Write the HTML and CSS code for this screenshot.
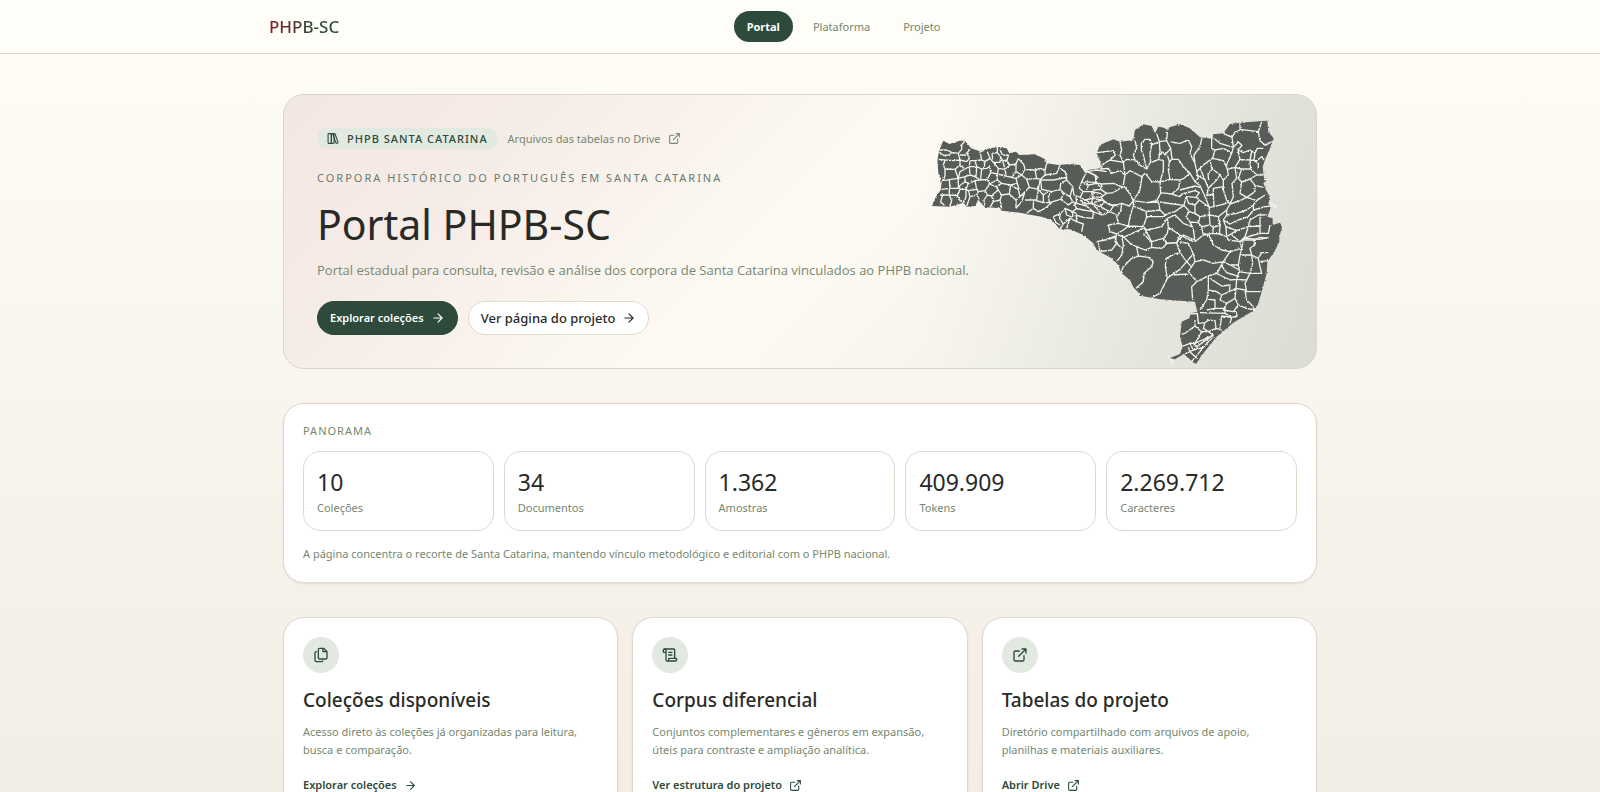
FILE: index.html
```html
<!DOCTYPE html>
<html lang="pt-BR">
<head>
    <meta charset="UTF-8">
    <meta name="viewport" content="width=device-width, initial-scale=1.0">
    <title>Portal PHPB-SC</title>
    <link rel="stylesheet" href="styles.css">
</head>
<body>

    <!-- ícones reutilizados -->
    <svg class="sprite" aria-hidden="true">
        <symbol id="i-arrow" viewBox="0 0 24 24"><path d="M5 12h14M12 5l7 7-7 7"/></symbol>
        <symbol id="i-external" viewBox="0 0 24 24"><path d="M15 3h6v6M10 14 21 3M18 13v6a2 2 0 0 1-2 2H5a2 2 0 0 1-2-2V8a2 2 0 0 1 2-2h6"/></symbol>
        <symbol id="i-library" viewBox="0 0 24 24"><rect x="2" y="3" width="6" height="18" rx="1"/><rect x="8" y="3" width="5" height="18" rx="1"/><path d="M20.400 18.900c.2.5-.1 1.100-.6 1.300l-1.900.7c-.5.2-1.100-.1-1.300-.6L11.100 5.100c-.2-.5.1-1.100.6-1.300l1.900-.7c.5-.2 1.100.1 1.300.6Z"/></symbol>
        <symbol id="i-files" viewBox="0 0 24 24"><path d="M15 2v5h5"/><path d="M10 2h6l5 5v9a2 2 0 0 1-2 2h-9a2 2 0 0 1-2-2V4a2 2 0 0 1 2-2Z"/><path d="M5 7a2 2 0 0 0-2 2v11a2 2 0 0 0 2 2h8a2 2 0 0 0 1.700-1"/></symbol>
        <symbol id="i-scroll" viewBox="0 0 24 24"><path d="M15 12h-5M15 8h-5M19 17V5a2 2 0 0 0-2-2H4"/><path d="M8 21h12a2 2 0 0 0 2-2v-1a1 1 0 0 0-1-1H11a1 1 0 0 0-1 1v1a2 2 0 1 1-4 0V5a2 2 0 1 0-4 0v2a1 1 0 0 0 1 1h3"/></symbol>
    </svg>

    <header class="topbar">
        <div class="topbar-inner">
            <a href="#" class="brand">PHPB-SC</a>
            <nav class="menu">
                <a href="#" class="menu-link active">Portal</a>
                <a href="#" class="menu-link">Plataforma</a>
                <a href="#" class="menu-link">Projeto</a>
            </nav>
        </div>
    </header>

    <main class="page">
        <section class="hero">
            <!-- mapa dos municípios -->
            <svg class="map" viewBox="60 54 1065 744" aria-hidden="true">
                <defs>
                    <filter id="rough" x="0" y="0" width="100%" height="100%">
                        <feTurbulence type="fractalNoise" baseFrequency="0.2" numOctaves="2" seed="4"/>
                        <feDisplacementMap in="SourceGraphic" scale="7" xChannelSelector="R" yChannelSelector="G"/>
                    </filter>
                </defs>
                <g filter="url(#rough)">
                    <path class="land" d="M100 122 118 132 148 122 165 122 183 145 205 152 220 153 238 145 262 142 290 145 298 160 318 155 328 165 375 163 400 175 410 190 445 195 480 192 510 195 525 218 535 210 570 205 575 195 560 160 570 135 610 118 630 125 670 120 675 90 700 73 725 78 735 100 745 80 768 85 772 96 778 82 810 73 840 85 870 112 905 116 910 103 940 100 960 72 990 68 1055 63 1072 62 1075 95 1091 115 1080 145 1065 180 1058 200 1062 235 1075 238 1060 250 1068 270 1080 290 1075 312 1082 318 1080 330 1072 350 1088 355 1088 375 1110 368 1116 382 1108 410 1108 425 1093 455 1072 485 1070 520 1055 575 1043 615 1025 635 970 668 920 710 880 760 858 792 835 775 822 762 795 778 780 774 810 762 818 740 810 710 815 665 838 655 842 640 862 635 855 605 810 602 750 598 695 588 670 562 660 540 635 520 625 495 605 475 560 450 550 430 520 405 480 388 450 388 425 360 395 350 360 344 330 338 275 332 270 324 225 322 205 300 195 318 170 320 160 308 120 320 65 318 78 290 92 270 95 245 85 220 82 180 88 150Z"/>

                    <!-- oeste -->
                    <path class="edge" d="M88 150 110 150 125 157 145 160 155 148 155 135 165 122M88 156 100 166 118 165 125 157M85 178 130 182 150 180 145 160M150 165 165 165 180 148M105 180 100 195 105 207 135 208 150 195 150 180 170 185 178 175 172 160M105 207 105 228 98 242 145 235 135 208M118 240 120 265 145 265 145 235M94 268 120 265M90 285 118 285 118 265M118 285 142 287 150 268M142 287 150 302 162 308M98 285 92 305 105 318M118 285 125 302 120 318M145 235 165 230 165 245 148 258 150 268 168 268 175 250 165 245M150 195 165 207 178 200 180 182M145 235 150 215 165 207M165 230 180 225 195 230M178 200 180 225M178 200 200 200 195 182M200 200 198 230M180 182 195 182 215 180 225 184M215 180 210 155 225 150M200 200 215 207 230 205 240 200M225 184 222 205M225 184 240 175 232 155M240 175 250 187 270 187 272 172M246 160 262 158 270 168 278 182 292 180M270 148 277 165 296 165M246 160 248 178M262 158 262 142M296 165 290 182 300 195 318 192 325 175M240 200 242 218 262 222 265 205 250 187M265 205 285 208 278 182M285 208 300 195M285 208 288 228 305 232 318 215 318 192M195 230 210 240 232 238 242 218M232 238 238 252 262 240 262 222 288 228M215 207 212 238M175 250 195 242 200 268 175 272 168 268M195 242 210 240M200 268 205 275 225 272 235 258 238 252M168 268 168 290 162 305M175 272 180 290 170 318M180 290 200 285 205 275M200 285 208 298M225 272 232 285 222 300 225 318M232 285 245 288 250 305 240 322M238 252 258 260 265 270 250 282 245 288M258 260 275 250 262 240M265 270 275 285 270 300 275 325M250 305 270 300M275 285 298 282 302 255 275 250M302 255 322 250 318 235 305 232M298 282 318 300 318 325M302 255 325 268 330 290 318 300M322 250 328 270M318 215 335 225 345 208 342 195M318 235 335 225 350 238 358 262 345 275 330 290M345 208 375 210 380 235 350 238M342 195 325 175M375 210 392 205 405 210 410 190M380 235 392 238 405 225 405 210M358 262 385 268 390 240M385 268 380 300 345 300M345 275 335 305 318 325M405 225 440 220 450 195M392 240 430 240 470 232 465 215 450 205M392 240 395 268 425 275 450 268 452 250 470 240 470 232M385 268 400 285 400 308 372 300M400 285 412 275M425 275 415 290 418 308 400 308M418 308 452 298 462 280 450 268M370 300 370 325 350 340M370 325 385 335 405 325 425 308M462 280 480 290 488 305 475 315 452 298M470 240 488 260 480 290M488 260 492 285 510 292 520 275 508 265 515 245 530 215M488 305 500 325 488 335 465 325 452 340 430 350M452 340 448 355 460 372 450 388M430 350 438 368 450 375M465 325 470 345 488 352 488 335M460 372 480 355 500 365 498 340 488 335M480 355 470 385M500 365 520 372 515 395M510 292 525 300 548 295 545 275 520 275M500 325 520 330 550 335 548 355 520 352 498 345M500 310 530 318 550 335M488 305 500 310 498 290M550 335 575 345 600 335 620 345M525 300 545 310 560 325 575 345M545 310 575 300 600 315 625 315M548 295 575 300M515 245 535 255 530 270M535 255 560 250 570 260M545 275 570 280 580 290M530 215 555 225 560 250M530 215 560 210 590 215"/>

                    <!-- norte e vale -->
                    <path class="edge" transform="translate(510 0)" d="M50 158 100 152 106 165 90 180 72 190 62 207 85 205 95 220 120 212 135 225 150 212 185 230 195 220M120 125 125 150 120 165 130 187 135 225M90 180 130 187 140 178 165 180 182 197 200 207M165 120 170 145 160 165 165 180M184 130 195 118 210 118 215 135 210 160 212 185 200 207 196 190 190 165 184 150ZM215 135 238 125 230 100M238 125 240 155 236 178 215 187M238 125 260 122 262 96M260 122 272 145 255 165 246 155 242 165M236 178 250 182 250 212 240 245M262 165 268 185 265 210 270 238M272 145 276 178 295 178M272 126 300 130 325 120 335 140 330 160 345 190M295 178 310 200 330 220 345 245 355 235 350 215 370 195 390 180M268 185 276 178M365 115 360 140 342 165 345 190 350 215M395 108 395 145 405 150M398 112 420 130 460 142M405 150 430 145 455 158M405 150 398 175 390 180M398 175 430 182 438 198M430 100 456 112 465 96 480 90M480 68 480 88 535 95 545 65M535 95 540 122 556 136 575 125M456 112 460 142 455 160 438 198M460 142 475 126 486 136 474 150 490 158 510 150 525 160 532 145 550 145M474 150 480 178 465 202M480 178 510 180 515 155M510 180 530 182 545 170 552 180M525 160 522 182 535 190 535 207M510 180 512 207 530 225 550 225M438 198 442 208 465 202 485 207 512 207M485 207 475 235 485 246 510 237 530 225M510 237 525 256 550 262M485 246 480 280 500 292 525 275 525 256M500 292 530 302 555 285M465 202 470 235 456 250 460 290 450 312M442 208 445 225 430 240 430 270 440 300 450 312 480 302 500 292M390 180 395 205 420 225 410 240 385 265 375 240 352 225M420 225 430 240M385 265 380 287 400 282 400 265 430 260M345 245 360 257 375 290 388 322M400 282 402 320M360 205 375 240M396 208 384 222 386 240M196 220 215 245 240 246 270 238 300 240 312 235 330 220M135 225 130 255 148 280 160 302 180 270 186 230M30 218 52 230 45 248 15 245M45 248 65 252 100 250 130 262M65 252 62 268 80 280 100 278 120 265 130 262M62 268 40 270 38 290 60 292 80 280M38 290 35 310 60 320 75 305 62 292M75 305 100 318 125 310 148 318 160 302M100 318 90 335 60 320M160 302 200 308 230 302 242 280 240 246M242 278 275 282 296 265 300 240M300 270 345 258 360 262M305 282 345 272 358 278 348 292 318 290M275 282 300 290 305 282M0 300 15 312 35 310M125 310 122 335 110 350 115 370 145 378 150 350 160 318 160 302M160 318 200 335 240 330M200 308 235 306 240 330 255 345M240 306 280 312 312 316 318 290M145 378 190 380 200 350 198 335M200 350 250 350 265 340 285 335 312 316M190 380 200 390 245 380 262 355M262 355 265 382 300 405 340 425M262 355 285 345 310 370 335 380M312 316 328 335 318 350 330 366M318 290 326 310 345 315 358 300 388 322M345 315 345 340 328 335M345 340 360 350 355 368 330 366 340 388 345 425M358 300 348 292M360 350 388 345 388 322 402 320 440 310M388 345 390 375 365 380 355 368M390 345 415 350 440 330 450 312M365 380 370 405 345 425M390 375 400 382 420 375 415 350M400 382 398 400 418 402 420 378M398 400 370 405M418 402 440 410 438 380 430 360 440 345 470 340 500 330 520 315 530 302M440 345 440 330M430 360 450 372 475 360 505 350 520 330 555 320 575 318M438 380 470 392 505 380 510 360 535 345 560 345M470 392 440 410 445 420 480 425 495 410 505 380M505 380 540 378 540 350M540 378 540 400 510 408 495 415 540 418 565 412M540 400 565 400 570 375M520 330 520 315M85 375 115 370M85 375 90 395 110 402 130 390 145 378M110 402 105 425 125 445M110 402 130 412 190 385M190 380 215 425 250 415 262 400 265 382M250 415 260 430 290 428 300 405M75 420 105 412"/>

                    <!-- serra e sul -->
                    <path class="edge" transform="translate(510 390)" d="M50 35 75 30 105 18M55 40 60 65 95 60 110 40 105 18M125 15 130 45 125 75 110 95M125 15 150 40 170 50 175 78 155 85 130 110 122 128M175 78 205 82 220 95 215 110 192 130 190 155 168 175M170 50 195 60 215 52 245 55 262 40 250 25M215 52 215 38 190 10M262 40 290 38 300 68 285 72 258 85 256 110 262 145 240 190 215 202M290 38 310 15 345 30M300 36 325 40 340 72 320 95 300 68M320 95 335 110 345 95 370 90 400 100 430 95 450 65 425 60 400 45 390 20 372 10M340 72 345 95M320 95 300 118 275 135 262 145M335 110 325 125 350 155 335 170 338 210M275 135 325 132M350 155 385 138 410 130 430 95M385 138 385 180 380 210 360 240M450 65 485 55 480 35 455 15M485 55 490 30 520 30 540 22 565 25M480 35 500 20M430 95 450 105 475 105 480 75 485 55M450 105 478 120 475 105M410 130 425 138 450 150 470 148 478 120M425 108 440 128 478 140M520 30 525 45 510 55 515 75 535 85 545 68 565 68M480 75 515 75M515 75 518 100 510 130 475 125M535 85 540 110 545 130 510 130M540 95 565 92M510 130 495 160 500 185 540 185M470 148 498 150M470 148 468 175 448 185 450 165 425 168 390 145M448 185 425 195 410 185 385 180M425 195 420 210 440 220 465 205 468 175M468 175 495 180 500 210 515 225 525 240M440 220 430 240 460 245 475 225 500 235 525 240M465 205 475 225M385 208 405 210 405 235 380 240M360 248 435 250 435 235 405 235M435 250 455 262 472 258 468 245 460 245M455 262 425 258 420 295M455 262 450 280M332 252 352 250 355 280 375 278 385 270 405 272 408 295 385 305 370 295 375 278M345 288 315 310 305 312M345 288 365 305 385 305 400 315 345 340 330 340 305 350M400 315 350 350 340 340M400 320 372 350 335 395M345 288 345 270M330 340 340 360 315 372M340 360 370 352M345 345 355 358M325 352 330 365 350 385M408 295 425 300M365 305 355 325 345 338M375 325 385 330"/>
                    <path class="edge" d="M776 770 785 785 790 798M776 766 782 780"/>
                    <path class="edge" d="M1080 308 1098 320 1090 326M1062 238 1075 240"/>
                </g>
            </svg>

            <div class="hero-text">
                <div class="hero-top">
                    <span class="badge"><svg class="icon"><use href="#i-library"/></svg>PHPB Santa Catarina</span>
                    <a href="#" class="drive-link">Arquivos das tabelas no Drive <svg class="icon"><use href="#i-external"/></svg></a>
                </div>
                <p class="overline">Corpora histórico do português em Santa Catarina</p>
                <h1>Portal PHPB-SC</h1>
                <p class="lead">Portal estadual para consulta, revisão e análise dos corpora de Santa Catarina vinculados ao PHPB nacional.</p>
                <div class="actions">
                    <a href="#" class="btn btn-dark">Explorar coleções <svg class="icon"><use href="#i-arrow"/></svg></a>
                    <a href="#" class="btn btn-light">Ver página do projeto <svg class="icon"><use href="#i-arrow"/></svg></a>
                </div>
            </div>
        </section>

        <section class="panel">
            <h2 class="panel-title">Panorama</h2>
            <div class="stats">
                <div class="stat"><strong>10</strong><span>Coleções</span></div>
                <div class="stat"><strong>34</strong><span>Documentos</span></div>
                <div class="stat"><strong>1.362</strong><span>Amostras</span></div>
                <div class="stat"><strong>409.909</strong><span>Tokens</span></div>
                <div class="stat"><strong>2.269.712</strong><span>Caracteres</span></div>
            </div>
            <p class="panel-note">A página concentra o recorte de Santa Catarina, mantendo vínculo metodológico e editorial com o PHPB nacional.</p>
        </section>

        <section class="cards">
            <article class="card">
                <span class="card-icon"><svg class="icon"><use href="#i-files"/></svg></span>
                <h2>Coleções disponíveis</h2>
                <p>Acesso direto às coleções já organizadas para leitura, busca e comparação.</p>
                <a href="#">Explorar coleções <svg class="icon"><use href="#i-arrow"/></svg></a>
            </article>
            <article class="card">
                <span class="card-icon"><svg class="icon"><use href="#i-scroll"/></svg></span>
                <h2>Corpus diferencial</h2>
                <p>Conjuntos complementares e gêneros em expansão, úteis para contraste e ampliação analítica.</p>
                <a href="#">Ver estrutura do projeto <svg class="icon"><use href="#i-external"/></svg></a>
            </article>
            <article class="card">
                <span class="card-icon"><svg class="icon"><use href="#i-external"/></svg></span>
                <h2>Tabelas do projeto</h2>
                <p>Diretório compartilhado com arquivos de apoio, planilhas e materiais auxiliares.</p>
                <a href="#">Abrir Drive <svg class="icon"><use href="#i-external"/></svg></a>
            </article>
        </section>
    </main>

</body>
</html>
```
FILE: styles.css
```css
* {
    box-sizing: border-box;
}
html {
    background: #f2ede5;
}
body {
    margin: 0;
    font-family: "Noto Sans", "Open Sans", sans-serif;
    font-size: 11px;
    line-height: 18px;
    color: #292a26;
    background: linear-gradient(#fffdf7, #f2ede5 792px);
}
a {
    color: inherit;
    text-decoration: none;
}
h1, h2, p {
    margin: 0;
}
.sprite {
    position: absolute;
    width: 0;
    height: 0;
}
.icon {
    width: 13px;
    height: 13px;
    flex: none;
    fill: none;
    stroke: currentColor;
    stroke-width: 2;
    stroke-linecap: round;
    stroke-linejoin: round;
}

/* topo */
.topbar {
    background: #fffdf7;
    border-bottom: 1px solid #d9d6cf;
}
.topbar-inner {
    display: grid;
    grid-template-columns: 7fr 9fr;
    align-items: center;
    max-width: 1062px;
    height: 53px;
    margin: 0 auto;
}
.brand {
    justify-self: start;
    font-size: 17px;
    font-weight: 500;
    line-height: 24px;
    color: transparent;
    background: linear-gradient(90deg, #8b1f1f, #2d4a3a 60%);
    background-clip: text;
    -webkit-background-clip: text;
}
.menu {
    display: flex;
    gap: 7px;
}
.menu-link {
    padding: 7px 13px;
    border-radius: 16px;
    line-height: 17px;
    color: #758871;
}
.menu-link.active {
    color: #fff;
    font-weight: 700;
    background: #2d4a3a;
}

.page {
    display: flex;
    flex-direction: column;
    gap: 34px;
    max-width: 1034px;
    margin: 0 auto;
    padding: 40px 0;
}

/* destaque */
.hero {
    position: relative;
    padding: 33px;
    border: 1px solid #ddd5ca;
    border-radius: 21px;
    background:
        linear-gradient(90deg, rgba(205, 207, 198, 0) 62%, rgba(205, 207, 198, 0.5)),
        linear-gradient(135deg, #f3e7e2 0%, #f6ece7 20%, #fefbf4 51%, #e9eae3 100%);
}
.map {
    position: absolute;
    top: 23px;
    right: 31px;
    width: 355px;
    height: 248px;
}
.land {
    fill: #595c58;
}
.edge {
    fill: none;
    stroke: #f4f4ef;
    stroke-width: 4;
    stroke-linejoin: round;
}
.hero-text {
    position: relative;
}
.hero-top {
    display: flex;
    align-items: center;
    gap: 10px;
}
.badge {
    display: flex;
    align-items: center;
    gap: 7px;
    padding: 2px 10px;
    border-radius: 11px;
    font-weight: 500;
    line-height: 17px;
    letter-spacing: 1px;
    text-transform: uppercase;
    color: #2d4a3a;
    background: #e2e9e1;
}
.drive-link {
    display: flex;
    align-items: center;
    gap: 7px;
    color: #758871;
}
.overline {
    margin-top: 20px;
    letter-spacing: 2px;
    text-transform: uppercase;
    color: #697b6b;
}
h1 {
    margin-top: 13px;
    font-size: 41px;
    font-weight: 400;
    line-height: 48px;
}
.lead {
    margin-top: 10px;
    font-family: "Open Sans", "Noto Sans", sans-serif;
    font-size: 13px;
    line-height: 24px;
    color: #758871;
}
.actions {
    display: flex;
    gap: 10px;
    margin-top: 19px;
}
.btn {
    display: flex;
    align-items: center;
    gap: 7px;
    height: 34px;
    padding: 0 12px;
    border: 1px solid #e0dad0;
    border-radius: 17px;
}
.btn .icon {
    width: 14px;
    height: 14px;
}
.btn-dark {
    border-color: #2d4a3a;
    font-weight: 600;
    color: #fff;
    background: #2d4a3a;
}
.btn-light {
    font-size: 13px;
    font-weight: 500;
    background: #fff;
}

/* panorama */
.panel, .card {
    padding: 19px;
    border: 1px solid #e0d9ce;
    border-radius: 21px;
    background: #fff;
    box-shadow: 0 1px 2px rgba(80, 60, 30, 0.12);
}
.panel-title {
    font-size: 11px;
    font-weight: 400;
    line-height: 16px;
    letter-spacing: 1px;
    text-transform: uppercase;
    color: #758871;
}
.stats {
    display: grid;
    grid-template-columns: repeat(5, 1fr);
    gap: 10px;
    margin-top: 12px;
}
.stat {
    display: flex;
    flex-direction: column;
    padding: 13px;
    border: 1px solid #e0d9ce;
    border-radius: 17px;
    color: #758871;
}
.stat strong {
    font-size: 23px;
    font-weight: 400;
    line-height: 34px;
    color: #292a26;
}
.panel-note {
    margin-top: 14px;
    color: #758871;
}

/* cartões */
.cards {
    display: grid;
    grid-template-columns: repeat(3, 1fr);
    gap: 14px;
}
.card-icon {
    display: flex;
    align-items: center;
    justify-content: center;
    width: 36px;
    height: 36px;
    border-radius: 50%;
    color: #2d4a3a;
    background: #e2e9e1;
}
.card-icon .icon {
    width: 16px;
    height: 16px;
}
.card h2 {
    margin-top: 13px;
    font-size: 19px;
    font-weight: 500;
    line-height: 28px;
}
.card p {
    margin-top: 9px;
    color: #758871;
}
.card a {
    display: inline-flex;
    align-items: center;
    gap: 7px;
    margin-top: 17px;
    font-weight: 600;
    color: #2d4a3a;
}
```
